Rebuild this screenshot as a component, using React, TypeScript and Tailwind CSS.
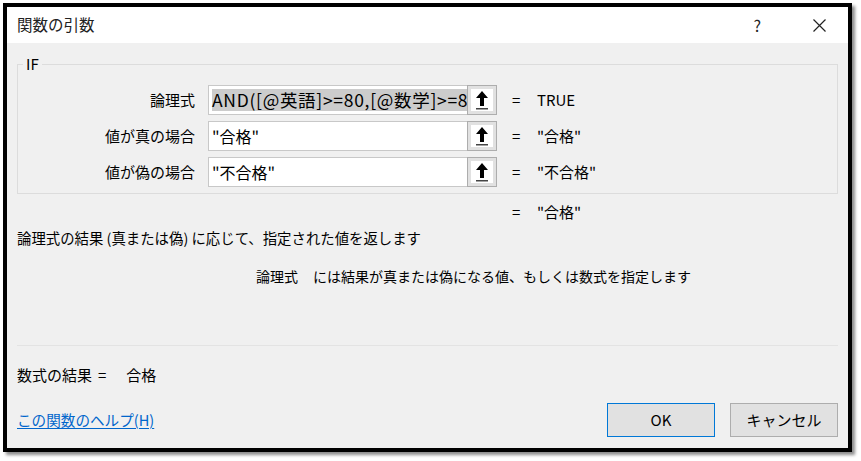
const font = { fontFamily: '"Noto Sans CJK JP", "Noto Sans", sans-serif' };

interface ArgRow {
  label: string;
  input: string;
  value: string;
  selected?: boolean;
}

const rows: ArgRow[] = [
  { label: "論理式", input: "AND([@英語]>=80,[@数学]>=80)", value: "TRUE", selected: true },
  { label: "値が真の場合", input: '"合格"', value: '"合格"' },
  { label: "値が偽の場合", input: '"不合格"', value: '"不合格"' },
];

const RefButton = () => (
  <div className="w-[30px] h-[30px] border border-[#adadad] bg-[#e1e1e1] p-[3px] flex shrink-0">
    <div className="flex-1 bg-white flex items-center justify-center">
      <svg width="14" height="20" viewBox="0 0 14 20">
        <polygon points="7,1 1,8 5,8 5,16 9,16 9,8 13,8" fill="#000" />
        <rect x="1" y="18" width="12" height="1.5" fill="#444" />
      </svg>
    </div>
  </div>
);

export default function App() {
  return (
    <div className="w-[861px] h-[461px] bg-white pt-[3px] pl-[3px] text-black" style={font}>
      <div className="w-[849px] h-[449px] border-4 border-black bg-[#f0f0f0] flex flex-col shadow-[3px_3px_3px_rgba(0,0,0,0.45)]">
        {/* Title bar */}
        <div className="h-[36px] bg-white flex items-center pl-[10px] shrink-0">
          <span className="text-[15.5px] text-[#222]">関数の引数</span>
          <div className="ml-auto flex items-center">
            <span className="text-[16px] text-[#222] mr-[52px]">?</span>
            <svg width="13" height="13" viewBox="0 0 13 13" className="mr-[22px]">
              <path d="M0.5 0.5 L12.5 12.5 M12.5 0.5 L0.5 12.5" stroke="#222" strokeWidth="1.2" />
            </svg>
          </div>
        </div>

        {/* Body */}
        <div className="flex-1 flex flex-col px-[10px]">
          {/* Argument group */}
          <div className="relative mt-[21px] h-[130px] border border-[#dcdcdc] pt-[20px] flex flex-col gap-[6px]">
            <span className="absolute left-[5px] top-[-11px] px-[3px] bg-[#f0f0f0] text-[15px] leading-[20px]">IF</span>
            {rows.map((r) => (
              <div key={r.label} className="flex items-center h-[30px]">
                <span className="w-[177px] text-right text-[15px] mr-[13px]">{r.label}</span>
                <div className="w-[259px] h-[30px] border border-[#c8c8c8] border-r-0 bg-white flex items-center pl-[3px] pr-[4px] overflow-hidden">
                  <span
                    className={
                      r.selected
                        ? "bg-[#cccccc] whitespace-nowrap text-[17.5px] tracking-[0.7px] leading-[22px]"
                        : "whitespace-nowrap text-[16px] leading-[22px]"
                    }
                  >
                    {r.input}
                  </span>
                </div>
                <RefButton />
                <span className="ml-[15px] w-[25px] text-[15px]">=</span>
                <span className="text-[15px]">{r.value}</span>
              </div>
            ))}
          </div>

          {/* Result of function */}
          <div className="mt-[8px] h-[20px] flex items-center pl-[495px] text-[15px]">
            <span className="w-[25px]">=</span>
            <span>"合格"</span>
          </div>

          <p className="mt-[6px] h-[20px] leading-[20px] text-[14.4px] whitespace-nowrap">
            論理式の結果 (真または偽) に応じて、指定された値を返します
          </p>

          <p className="mt-[18px] h-[20px] leading-[20px] text-[14px] pl-[239px] whitespace-nowrap">
            <span className="mr-[15px]">論理式</span>には結果が真または偽になる値、もしくは数式を指定します
          </p>

          <div className="mt-[59px] h-px bg-[#e3e3e3]" />

          <p className="mt-[19px] h-[20px] leading-[20px] text-[15px] whitespace-nowrap">
            数式の結果<span className="ml-[6px]">=</span>
            <span className="ml-[20px]">合格</span>
          </p>

          {/* Footer */}
          <div className="mt-[18px] flex items-center">
            <a href="#" className="text-[14.6px] text-[#0066cc] underline underline-offset-2">
              この関数のヘルプ(H)
            </a>
            <div className="ml-auto flex gap-[15px]">
              <button className="w-[108px] h-[34px] border border-[#0078d7] bg-[#e1e1e1] text-[15px]">OK</button>
              <button className="w-[108px] h-[34px] border border-[#adadad] bg-[#e1e1e1] text-[15px]">キャンセル</button>
            </div>
          </div>
        </div>
      </div>
    </div>
  );
}
